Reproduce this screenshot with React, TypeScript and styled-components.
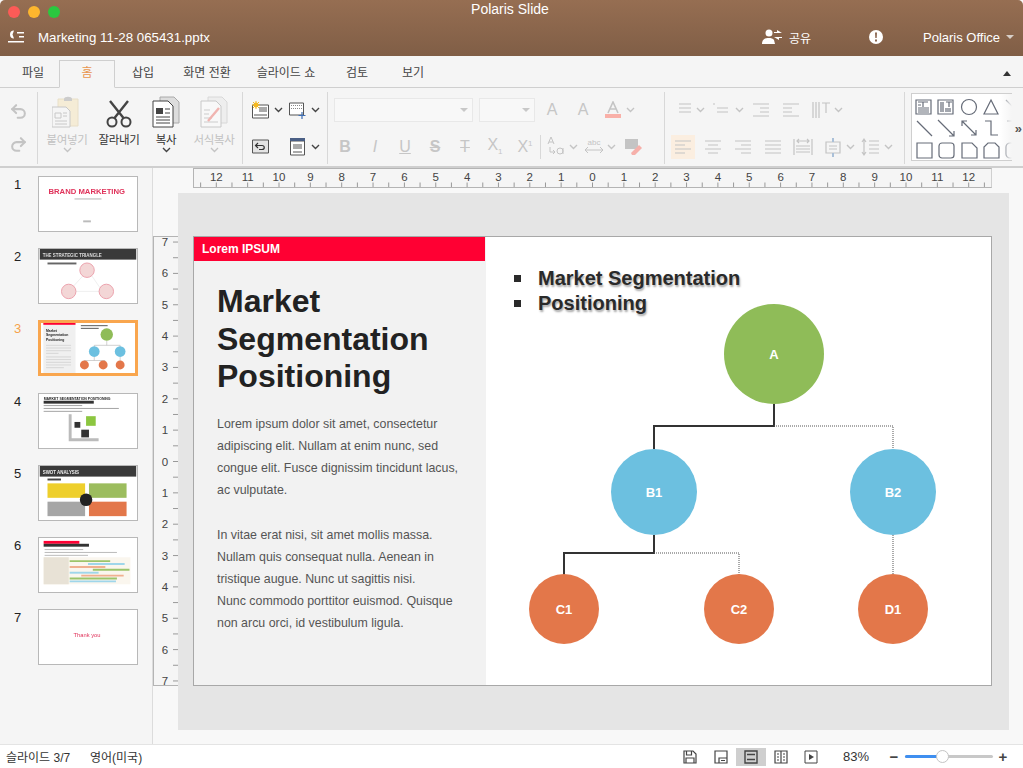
import React from 'react'
import styled, { createGlobalStyle } from 'styled-components'
import { Undo2, Redo2 } from 'lucide-react'

const KR = `"Liberation Sans", "Noto Sans CJK KR", sans-serif`

const GlobalStyle = createGlobalStyle`
    html, body { margin: 0; padding: 0; background: #f8f8f8; }
    body { font-family: ${KR}; overflow: hidden; }
    * { box-sizing: border-box; }
`

const Window = styled.div`
    width: 1023px;
    height: 768px;
    display: flex;
    flex-direction: column;
    overflow: hidden;
`

/* title bar */
const TitleBar = styled.div`
    height: 56px;
    flex: none;
    color: #fff;
    border-radius: 5px 5px 0 0;
    background: linear-gradient(#966e52, #805e46);
    display: flex;
    flex-direction: column;
`
const TitleTop = styled.div`
    height: 20px;
    position: relative;
    text-align: center;
    font-size: 14px;
    line-height: 19px;
    padding-right: 3px;
`
const Lights = styled.div`
    position: absolute;
    left: 8px;
    top: 6px;
    display: flex;
    gap: 8px;
`
const Light = styled.span<{ $c: string }>`
    width: 12px;
    height: 12px;
    border-radius: 50%;
    background: ${p => p.$c};
`
const TitleRow = styled.div`
    display: flex;
    align-items: center;
    height: 30px;
    margin-top: 2px;
    padding-left: 8px;
    font-size: 13px;
`
const FileName = styled.span`
    margin-left: 14px;
    flex: 1;
    font-size: 13.3px;
`
const Share = styled.span`
    display: flex;
    align-items: center;
    gap: 6px;
    font-size: 12px;
    width: 107px;
`
const Account = styled.span`
    margin-left: 40px;
    display: flex;
    align-items: center;
    gap: 6px;
    width: 100px;
    font-size: 13px;
`
const Caret = styled.i`
    border: 4px solid transparent;
    border-top: 4px solid #d8cfc8;
    border-bottom: 0;
`

/* tabs */
const TabBar = styled.div`
    height: 32px;
    flex: none;
    background: #f5f5f5;
    border-bottom: 1px solid #cfcfcf;
    display: flex;
    align-items: flex-end;
    padding-left: 7px;
    position: relative;
`
const Tab = styled.div<{ $w: number; $active?: boolean }>`
    width: ${p => p.$w}px;
    height: 28px;
    margin-bottom: -1px;
    text-align: center;
    font-size: 12px;
    line-height: 24px;
    color: ${p => (p.$active ? '#e8964e' : '#444')};
    border: 1px solid ${p => (p.$active ? '#cfcfcf' : 'transparent')};
    border-bottom-color: ${p => (p.$active ? '#f5f5f5' : 'transparent')};
`
const Collapse = styled.i`
    position: absolute;
    right: 12px;
    top: 15px;
    border: 4px solid transparent;
    border-bottom: 5px solid #333;
    border-top: 0;
`

/* ribbon */
const Ribbon = styled.div`
    height: 80px;
    flex: none;
    background: #f5f5f5;
    border-bottom: 2px solid #cfcfcf;
    display: flex;
    padding-top: 4px;
    padding-bottom: 2px;
    position: relative;
`
const Group = styled.div<{ $w: number }>`
    width: ${p => p.$w}px;
    flex: none;
    border-right: 1px solid #d8d8d8;
    display: flex;
    flex-direction: column;
    gap: 2px;
`
const Row = styled.div<{ $h?: number; $pl?: number }>`
    height: ${p => p.$h ?? 36}px;
    padding-left: ${p => p.$pl ?? 0}px;
    display: flex;
    align-items: center;
`
const Tool = styled.span<{ $w?: number; $ml?: number; $on?: boolean }>`
    width: ${p => p.$w ?? 24}px;
    height: 24px;
    margin-left: ${p => p.$ml ?? 0}px;
    flex: none;
    display: flex;
    align-items: center;
    justify-content: center;
    background: ${p => (p.$on ? '#fbeee0' : 'transparent')};
`
const Glyph = styled.span<{ $b?: boolean; $i?: boolean; $u?: boolean; $s?: boolean }>`
    font-size: 16px;
    color: #c6c6c6;
    font-weight: ${p => (p.$b ? 700 : 400)};
    font-style: ${p => (p.$i ? 'italic' : 'normal')};
    text-decoration: ${p => (p.$u ? 'underline' : p.$s ? 'line-through' : 'none')};
`
const Sub = styled.sub`
    font-size: 8px;
`
const Sup = styled.sup`
    font-size: 8px;
`
const UndoCol = styled(Group)`
    align-items: center;
    padding-right: 1px;
    gap: 14px;
    padding-top: 10px;
`
const BigTools = styled(Group)`
    flex-direction: row;
    padding-left: 0;
    gap: 0;
`
const BigTool = styled.div<{ $w: number; $off?: boolean }>`
    width: ${p => p.$w}px;
    display: flex;
    flex-direction: column;
    align-items: center;
    font-size: 11.5px;
    letter-spacing: -0.3px;
    color: ${p => (p.$off ? '#c2c2c2' : '#333')};
`
const BigIcon = styled.div`
    height: 36px;
    display: flex;
    align-items: flex-end;
    margin-bottom: 3px;
`
const SelectBox = styled.div<{ $w: number; $ml: number }>`
    width: ${p => p.$w}px;
    height: 24px;
    margin-left: ${p => p.$ml}px;
    flex: none;
    background: #f8f8f8;
    border: 1px solid #e8e8e8;
    display: flex;
    align-items: center;
    justify-content: flex-end;
    padding-right: 4px;
`
const SelectCaret = styled.i`
    border: 4px solid transparent;
    border-top: 4px solid #c8c8c8;
    border-bottom: 0;
`
const Sep = styled.i`
    width: 1px;
    height: 24px;
    margin-left: 3px;
    background: #d8d8d8;
`
const Gallery = styled.div`
    position: relative;
    width: 101px;
    height: 68px;
    margin: 1px 0 0 6px;
    background: #fff;
    border: 1px solid #cfcfcf;
    border-right: 0;
    overflow: hidden;
    display: grid;
    grid-template-columns: repeat(5, 22.3px);
    grid-auto-rows: 21.5px;
    padding: 2px 0 0 1px;
`
const Shape = styled.span`
    display: flex;
    align-items: center;
    justify-content: center;
`
const Fade = styled.i`
    position: absolute;
    top: 0;
    bottom: 0;
    right: 0;
    width: 12px;
    background: linear-gradient(90deg, rgba(245, 245, 245, 0), #f5f5f5);
`
const More = styled.span`
    position: absolute;
    right: 1px;
    top: 33px;
    font-size: 13px;
    font-weight: 700;
    color: #555;
`

/* main area */
const Main = styled.div`
    flex: 1;
    display: flex;
    min-height: 0;
`
const Sidebar = styled.div`
    width: 153px;
    flex: none;
    background: #f5f5f5;
    border-right: 1px solid #dcdcdc;
    padding-top: 8px;
    display: flex;
    flex-direction: column;
    gap: 16.2px;
`
const ThumbRow = styled.div`
    display: flex;
    height: 56px;
`
const ThumbNum = styled.span<{ $on?: boolean }>`
    width: 38px;
    padding: 1px 0 0 14px;
    font-size: 13px;
    color: ${p => (p.$on ? '#f5a24a' : '#222')};
`
const Thumb = styled.div<{ $on?: boolean }>`
    width: 100px;
    height: 56px;
    background: #fff;
    border: ${p => (p.$on ? '3px solid #f9a64e' : '1px solid #b8b8b8')};
    overflow: hidden;
    svg { display: block; width: 100%; height: 100%; filter: blur(0.25px); }
`
const Work = styled.div`
    flex: 1;
    background: #f8f8f8;
    display: flex;
    flex-direction: column;
    min-width: 0;
`
const HRuler = styled.div`
    width: 799px;
    height: 20px;
    margin-left: 40px;
    background: #f5f5f5;
    border: 1px solid #b4b4b4;
    border-right-color: #d0d0d0;
    flex: none;
    svg { display: block; }
`
const CanvasRow = styled.div`
    display: flex;
    margin-top: 5px;
`
const VRuler = styled.div`
    width: 25px;
    height: 450px;
    margin-top: 43px;
    background: #f5f5f5;
    border: 1px solid #b4b4b4;
    border-right: 0;
    flex: none;
    svg { display: block; }
`
const Canvas = styled.div`
    width: 831px;
    height: 537px;
    background: #e5e5e5;
    padding: 43px 0 0 15px;
`

/* slide */
const Slide = styled.div`
    width: 799px;
    height: 450px;
    background: #fff;
    border: 1px solid #a8a8a8;
    display: flex;
`
const LeftPane = styled.div`
    width: 292px;
    flex: none;
    background: #f2f2f2;
`
const RedBar = styled.div`
    width: 291px;
    height: 24px;
    background: #ff0033;
    color: #fff;
    font-size: 12px;
    font-weight: 700;
    line-height: 24px;
    padding-left: 8px;
`
const SlideTitle = styled.h1`
    margin: 22px 0 0 23px;
    font-size: 32px;
    line-height: 37.5px;
    font-weight: 700;
    color: #222;
`
const SlideBody = styled.p`
    margin: 17px 0 0 23px;
    font-size: 12.4px;
    line-height: 22.2px;
    color: #555;
    white-space: nowrap;
`
const RightPane = styled.div`
    flex: 1;
    position: relative;
`
const Bullets = styled.ul`
    margin: 0;
    padding: 29px 0 0 52px;
    list-style: none;
    font-size: 20px;
    line-height: 25px;
    font-weight: 700;
    color: #2a2a2a;
    text-shadow: 1px 2px 2px rgba(0, 0, 0, 0.35);
`
const BulletItem = styled.li`
    position: relative;
    &::before {
        content: '';
        position: absolute;
        left: -24px;
        top: 9px;
        width: 7px;
        height: 7px;
        background: #2a2a2a;
    }
`
const Wires = styled.svg`
    position: absolute;
    left: 0;
    top: 0;
`
const Node = styled.div<{ $x: number; $y: number; $r: number; $c: string }>`
    position: absolute;
    left: ${p => p.$x - p.$r}px;
    top: ${p => p.$y - p.$r}px;
    width: ${p => p.$r * 2}px;
    height: ${p => p.$r * 2}px;
    border-radius: 50%;
    background: ${p => p.$c};
    color: #fff;
    font-size: 13px;
    font-weight: 700;
    display: flex;
    align-items: center;
    justify-content: center;
`

/* status bar */
const StatusBar = styled.div`
    height: 24px;
    flex: none;
    background: #fff;
    border-top: 1px solid #e4e4e4;
    display: flex;
    align-items: center;
    padding-left: 6px;
    font-size: 12px;
    color: #333;
`
const StatusText = styled.span<{ $w: number }>`
    width: ${p => p.$w}px;
    flex: none;
`
const ViewBtn = styled.span<{ $on?: boolean; $ml?: number }>`
    width: 30px;
    height: 18px;
    margin-left: ${p => p.$ml ?? 0}px;
    display: flex;
    align-items: center;
    justify-content: center;
    background: ${p => (p.$on ? '#cfcfcf' : 'transparent')};
`
const Zoom = styled.span`
    margin-left: 17px;
    width: 45px;
    font-size: 13px;
`
const Sign = styled.span`
    font-size: 15px;
    font-weight: 700;
    line-height: 14px;
    width: 12px;
    text-align: center;
    color: #444;
`
const Track = styled.div`
    position: relative;
    width: 88px;
    height: 3px;
    margin: 0 4px 0 5px;
    border-radius: 2px;
    background: #c8c8c8;
`
const TrackFill = styled.div`
    width: 37px;
    height: 100%;
    border-radius: 2px;
    background: #3f8ff0;
`
const Thumbnail = styled.i`
    position: absolute;
    left: 31px;
    top: -5px;
    width: 13px;
    height: 13px;
    border-radius: 50%;
    background: #fff;
    border: 1px solid #c4c4c4;
`

const Svg = ({ w = 20, h = 20, c = '#c4c4c4', sw = 1.2, children }: { w?: number; h?: number; c?: string; sw?: number; children: React.ReactNode }) => (
    <svg width={w} height={h} viewBox={`0 0 ${w} ${h}`} fill="none" stroke={c} strokeWidth={sw}>
        {children}
    </svg>
)

const Chev = ({ c = '#c4c4c4' }: { c?: string }) => (
    <svg width="9" height="6" viewBox="0 0 9 6" fill="none" stroke={c} strokeWidth="1.4"><path d="M1 1l3.5 3.5L8 1" /></svg>
)

const Lines = ({ rows }: { rows: [number, number][] }) => (
    <Svg w={18} h={18}>
        <path d={rows.map(([a, b], i) => `M${a} ${3 + i * 4}H${b}`).join('')} />
    </Svg>
)

const PasteIcon = () => (
    <svg width="30" height="32" viewBox="0 0 30 32" fill="none">
        <path d="M6 3h20v27H6z" fill="#f5ecd6" stroke="#e8dfc8" />
        <path d="M12 3c0-3 8-3 8 0v2h-8z" fill="#ccc" />
        <path d="M0 11h14l4 4v16H0z" fill="#f5f5f5" stroke="#c8c8c8" />
        <path d="M3 17h6v5H3zM11 17h4M11 20h4M3 25h12M3 28h12" stroke="#c8c8c8" />
    </svg>
)
const CutIcon = () => (
    <svg width="26" height="28" viewBox="0 0 26 28" fill="none" stroke="#444">
        <circle cx="6" cy="22" r="4.5" strokeWidth="2" />
        <circle cx="20" cy="22" r="4.5" strokeWidth="2" />
        <path d="M8.5 18L22 1M17.5 18L4 1" strokeWidth="2.4" />
    </svg>
)
const CopyIcon = () => (
    <svg width="28" height="32" viewBox="0 0 28 32" fill="none">
        <path d="M8 1h14l5 5v21H8z" fill="#ddd" stroke="#aaa" />
        <path d="M1 5h15l5 5v21H1z" fill="#fff" stroke="#444" />
        <path d="M4 12h7v6H4z" fill="#444" />
        <path d="M13 13h5M13 17h5M4 21h14M4 24h14M4 27h14" stroke="#444" />
    </svg>
)
const FormatIcon = () => (
    <svg width="28" height="32" viewBox="0 0 28 32" fill="none">
        <path d="M8 1h14l5 5v21H8z" fill="#eee" stroke="#d8d8d8" />
        <path d="M1 5h15l5 5v21H1z" fill="#f8f8f8" stroke="#c8c8c8" />
        <path d="M4 14h6M4 18h5M4 22h8M4 26h14" stroke="#ccc" />
        <path d="M8 25L19 12" stroke="#f0b4b0" strokeWidth="2.4" />
    </svg>
)
const NewSlideIcon = () => (
    <svg width="18" height="18" viewBox="0 0 18 18" fill="none">
        <path d="M.5 4h16v13H.5z" fill="#fff" stroke="#555" />
        <path d="M7 6h8v5H7zM2 13h13v2H2z" fill="#aaa" />
        <circle cx="4" cy="4" r="2.4" fill="#f5b921" />
        <path d="M4 0v8M0 4h8M1 1l6 6M7 1L1 7" stroke="#f5b921" />
    </svg>
)
const TableIcon = () => (
    <svg width="18" height="18" viewBox="0 0 18 18" fill="none">
        <path d="M.5 2h14v12H.5z" stroke="#555" fill="#fff" />
        <path d="M2 4.5h11M2 7.5h11" stroke="#888" strokeDasharray="1 1" />
        <path d="M13 11v7M9.5 14.500h7" stroke="#3f6fb5" strokeWidth="1.2" />
    </svg>
)
const ResetIcon = () => (
    <svg width="18" height="16" viewBox="0 0 18 16" fill="none">
        <path d="M.5 1h16v13H.5z" fill="#e4e4e4" stroke="#555" />
        <path d="M6 4L3.500 6.500 6 9M4 6.500h6c3 0 3 4 0 4H7" stroke="#333" strokeWidth="1.2" />
    </svg>
)
const LayoutIcon = () => (
    <svg width="16" height="18" viewBox="0 0 16 18" fill="none">
        <path d="M.5 3h14v14H.5z" fill="#fff" stroke="#555" />
        <path d="M0 0h15v3H0z" fill="#4a5f85" />
        <path d="M3 6h9v5H3zM3 13h9v2H3z" fill="#aaa" />
    </svg>
)

const shapes = [
    <g><path d="M1 2h15v14H1z" /><path d="M3 4h10M8 4v5M3 7h3M3 10h11M3 12h11M3 14h11" /></g>,
    <g><path d="M1 2h15v14H1z" /><path d="M4 4v10M6 4v10M9 4h6M12 4v5M9 10v4M11 10v4M13 10v4" /></g>,
    <circle cx="9" cy="9" r="7.500" />,
    <path d="M9 2l7 14H2z" />,
    <path d="M2 2l14 14" />,
    <path d="M2 2l15 15" />,
    <path d="M1 1l16 16M17 12v5h-5" />,
    <path d="M2 2l14 14M2 7V2h5M16 11v5h-5" />,
    <path d="M3 2h6v14h7" />,
    <path d="M3 2h6v14h7" />,
    <path d="M2 2h15v15H2z" />,
    <rect x="2" y="2" width="15" height="15" rx="3" />,
    <path d="M2 2h10l5 5v10H2z" />,
    <path d="M6 2h7l4 4v11H2V6z" />,
    <rect x="2" y="2" width="15" height="15" rx="4" />,
]

const RulerH = () => {
    const u = 31.35
    const c = 398.500
    const ticks = []
    for (let i = -25; i <= 25; i++) ticks.push(c + (i * u) / 2)
    const nums = []
    for (let i = -12; i <= 12; i++) nums.push(i)
    return (
        <svg width="797" height="18" viewBox="0 0 797 18">
            {ticks.map(x => (
                <line key={x} x1={x} x2={x} y1={13.500} y2={18} stroke="#999" />
            ))}
            {nums.map(n => (
                <text key={n} x={c + n * u} y={12} fontSize="11.5" fill="#444" textAnchor="middle" fontFamily={KR}>{Math.abs(n)}</text>
            ))}
        </svg>
    )
}

const RulerV = () => {
    const u = 31.35
    const c = 224.500
    const ticks = []
    for (let i = -14; i <= 14; i++) ticks.push(c + (i * u) / 2)
    const nums = []
    for (let i = -7; i <= 7; i++) nums.push(i)
    return (
        <svg width="24" height="448" viewBox="0 0 24 448">
            {ticks.map(y => (
                <line key={y} x1={19} x2={24} y1={y} y2={y} stroke="#999" />
            ))}
            {nums.map(n => (
                <text key={n} x={11} y={c + n * u + 4} fontSize="11.5" fill="#444" textAnchor="middle" fontFamily={KR}>{Math.abs(n)}</text>
            ))}
        </svg>
    )
}

const T = ({ x, y, s, c = '#222', b, children }: { x: number; y: number; s: number; c?: string; b?: boolean; children: React.ReactNode }) => (
    <text x={x} y={y} fontSize={s} fill={c} fontWeight={b ? 700 : 400} fontFamily={KR}>{children}</text>
)

const thumbs = [
    <svg viewBox="0 0 100 56">
        <T x={9} y={18} s={8} c="#e0325a" b>BRAND MARKETING</T>
        <rect x={36} y={22} width={28} height={1.500} fill="#ccc" />
        <rect x={45} y={45} width={8} height={2} fill="#bbb" />
    </svg>,
    <svg viewBox="0 0 100 56">
        <rect width="100" height="11" fill="#3a3a3a" />
        <T x={3} y={8} s={4.600} c="#ddd" b>THE STRATEGIC TRIANGLE</T>
        <rect x={8} y={14} width={30} height={2} fill="#666" />
        <path d="M50 22L30 44H65z" stroke="#eee" fill="none" />
        {[[49, 22], [30, 44], [69, 44]].map(([x, y]) => (
            <circle key={x} cx={x} cy={y} r={7.500} fill="#f3d6d6" stroke="#eba0ac" />
        ))}
    </svg>,
    <svg viewBox="0 0 100 56">
        <rect width="36" height="56" fill="#f0f0f0" />
        <rect width="36" height="2" fill="#ff0033" />
        <T x={3} y={10} s={3.800} b>Market</T>
        <T x={3} y={15} s={3.800} b>Segmentation</T>
        <T x={3} y={20} s={3.800} b>Positioning</T>
        <path d="M3 25h28M3 28h28M3 31h28M3 34h14M3 38h28M3 41h28M3 44h28M3 47h28M3 50h20" stroke="#ccc" strokeWidth=".8" />
        <path d="M42 3h30M42 6h20" stroke="#444" strokeWidth="1" />
        <path d="M71 20v5H57v4M71 25h15v4M57 38v4H46v3M57 42h12v3M86 38v7" stroke="#999" strokeWidth=".5" fill="none" />
        <circle cx="71" cy="13" r="7" fill="#8fbc58" />
        <circle cx="57" cy="32" r="6" fill="#6cc0e0" />
        <circle cx="86" cy="32" r="6" fill="#6cc0e0" />
        <circle cx="46" cy="47" r="5" fill="#e3774a" />
        <circle cx="67" cy="47" r="5" fill="#e3774a" />
        <circle cx="86" cy="47" r="5" fill="#e3774a" />
    </svg>,
    <svg viewBox="0 0 100 56">
        <T x={4} y={6} s={3.600} b>MARKET SEGMENTATION POSITIONING</T>
        <rect x={4} y={7} width={52} height={3} fill="#333" />
        <path d="M4 12h40M4 15h78M4 18h40" stroke="#888" strokeWidth=".8" />
        <path d="M30 21h3v25h28v3H30z" fill="#bbb" />
        <rect x="36" y="29" width="6" height="6" fill="#333" />
        <rect x="43" y="37" width="8" height="8" fill="#333" />
        <rect x="48" y="23" width="10" height="10" fill="#8cc640" />
    </svg>,
    <svg viewBox="0 0 100 56">
        <rect width="100" height="11" fill="#3a3a3a" />
        <T x={3} y={8} s={4.600} c="#eee" b>SWOT ANALYSIS</T>
        <rect x={8} y={13} width={14} height={2} fill="#444" />
        <rect x="8" y="18" width="39" height="15" fill="#eecf2c" />
        <rect x="51" y="18" width="39" height="15" fill="#9cbd5e" />
        <rect x="8" y="37" width="39" height="15" fill="#a6a6a6" />
        <rect x="51" y="37" width="39" height="15" fill="#e3774a" />
        <circle cx="48" cy="35" r="6.500" fill="#222" />
    </svg>,
    <svg viewBox="0 0 100 56">
        <rect x="4" y="3" width="37" height="3" fill="#ff0033" />
        <rect x="4" y="6" width="47" height="3" fill="#333" />
        <path d="M5 12h40M5 15h75M5 18h45" stroke="#999" strokeWidth=".7" />
        <rect x="4" y="20" width="90" height="28" fill="#faf6ee" />
        <rect x="4" y="20" width="26" height="28" fill="#e8e2d6" />
        <path d="M31 24h42" stroke="#9cc46a" strokeWidth="2" />
        <path d="M50 27h38" stroke="#9fd6ea" strokeWidth="2" />
        <path d="M31 30h37" stroke="#f0b090" strokeWidth="2" />
        <path d="M55 33h38" stroke="#9cc46a" strokeWidth="2" />
        <path d="M31 36h30" stroke="#9fd6ea" strokeWidth="2" />
        <path d="M43 39h44" stroke="#f0b090" strokeWidth="2" />
        <path d="M31 42h49" stroke="#9cc46a" strokeWidth="2" />
        <path d="M31 45h48" stroke="#9fd6ea" strokeWidth="2" />
    </svg>,
    <svg viewBox="0 0 100 56">
        <T x={35} y={28} s={6} c="#e0325a">Thank you</T>
    </svg>,
]

const tabs: [string, number][] = [
    ['파일', 52], ['홈', 56], ['삽입', 56], ['화면 전환', 72], ['슬라이드 쇼', 86], ['검토', 56], ['보기', 56],
]

const bodyLines = [
    'Lorem ipsum dolor sit amet, consectetur',
    'adipiscing elit. Nullam at enim nunc, sed',
    'congue elit. Fusce dignissim tincidunt lacus,',
    'ac vulputate.',
    '',
    'In vitae erat nisi, sit amet mollis massa.',
    'Nullam quis consequat nulla. Aenean in',
    'tristique augue. Nunc ut sagittis nisi.',
    'Nunc commodo porttitor euismod. Quisque',
    'non arcu orci, id vestibulum ligula.',
]

export default function App() {
    return (
        <Window>
            <GlobalStyle />
            <TitleBar>
                <TitleTop>
                    <Lights>
                        <Light $c="#fc5b57" />
                        <Light $c="#fdb62e" />
                        <Light $c="#2ac83f" />
                    </Lights>
                    Polaris Slide
                </TitleTop>
                <TitleRow>
                    <svg width="16" height="14" viewBox="0 0 16 14" fill="#fff">
                        <path d="M0 11h16v1.500H0zM9 2h7v1.500H9zM11 6h5v1.500h-5z" />
                        <path d="M6 0.500a4 4 0 1 0 0 8l-1.500-4z" />
                    </svg>
                    <FileName>Marketing 11-28 065431.pptx</FileName>
                    <Share>
                        <svg width="21" height="16" viewBox="0 0 21 16" fill="#fff">
                            <circle cx="7" cy="4" r="3.500" />
                            <path d="M0 15c0-5 3-6 7-6 2 0 4 .5 5 2l1 4z" />
                            <path d="M15 3V1l5 3h-8V3zM17 9v2l-5-3h8v1z" />
                        </svg>
                        공유
                    </Share>
                    <svg width="14" height="14" viewBox="0 0 14 14">
                        <circle cx="7" cy="7" r="7" fill="#fff" />
                        <path d="M6 2.500h2l-.3 5.500H6.300zM6 9.500h2v2H6z" fill="#8a6650" />
                    </svg>
                    <Account>Polaris Office <Caret /></Account>
                </TitleRow>
            </TitleBar>

            <TabBar>
                {tabs.map(([label, w]) => (
                    <Tab key={label} $w={w} $active={label === '홈'}>{label}</Tab>
                ))}
                <Collapse />
            </TabBar>

            <Ribbon>
                <UndoCol $w={38}>
                    <Undo2 size={19} color="#c4c4c4" strokeWidth={2.6} />
                    <Redo2 size={19} color="#c4c4c4" strokeWidth={2.6} />
                </UndoCol>
                <BigTools $w={205}>
                    <BigTool $w={58} $off>
                        <BigIcon><PasteIcon /></BigIcon>
                        붙여넣기
                        <Chev />
                    </BigTool>
                    <BigTool $w={46}>
                        <BigIcon><CutIcon /></BigIcon>
                        잘라내기
                    </BigTool>
                    <BigTool $w={48}>
                        <BigIcon><CopyIcon /></BigIcon>
                        복사
                        <Chev c="#444" />
                    </BigTool>
                    <BigTool $w={48} $off>
                        <BigIcon><FormatIcon /></BigIcon>
                        서식복사
                        <Chev />
                    </BigTool>
                </BigTools>
                <Group $w={85}>
                    <Row $pl={6}>
                        <Tool $w={24}><NewSlideIcon /></Tool>
                        <Tool $w={10}><Chev c="#444" /></Tool>
                        <Tool $w={24} $ml={3}><TableIcon /></Tool>
                        <Tool $w={10}><Chev c="#444" /></Tool>
                    </Row>
                    <Row $pl={6}>
                        <Tool $w={24}><ResetIcon /></Tool>
                        <Tool $w={24} $ml={13}><LayoutIcon /></Tool>
                        <Tool $w={10}><Chev c="#444" /></Tool>
                    </Row>
                </Group>
                <Group $w={337}>
                    <Row>
                        <SelectBox $w={139} $ml={6}><SelectCaret /></SelectBox>
                        <SelectBox $w={56} $ml={6}><SelectCaret /></SelectBox>
                        <Tool $w={24} $ml={5}><Glyph>A</Glyph></Tool>
                        <Tool $w={24} $ml={7}><Glyph>A</Glyph></Tool>
                        <Tool $w={24} $ml={6}>
                            <svg width="18" height="18" viewBox="0 0 18 18" fill="none">
                                <path d="M4 12L9 1l5 11M6 8h6" stroke="#c4c4c4" strokeWidth="1.600" />
                                <path d="M1 13h16v4H1z" fill="#f9b0a8" />
                            </svg>
                        </Tool>
                        <Tool $w={10}><Chev /></Tool>
                    </Row>
                    <Row $pl={5}>
                        <Tool><Glyph $b>B</Glyph></Tool>
                        <Tool $ml={6}><Glyph $i>I</Glyph></Tool>
                        <Tool $ml={6}><Glyph $u>U</Glyph></Tool>
                        <Tool $ml={6}><Glyph $b $s>S</Glyph></Tool>
                        <Tool $ml={6}><Glyph $s>T</Glyph></Tool>
                        <Tool $ml={6}><Glyph>X<Sub>1</Sub></Glyph></Tool>
                        <Tool $ml={6}><Glyph>X<Sup>1</Sup></Glyph></Tool>
                        <Sep />
                        <Tool $ml={3}>
                            <svg width="20" height="22" viewBox="0 0 20 22" fill="none" stroke="#c4c4c4">
                                <path d="M2 8l3-7 3 7M3 6h4M4 11v5h5M7 14l2 2-2 2" />
                                <circle cx="14" cy="15" r="3" />
                                <path d="M17 12v6" />
                            </svg>
                        </Tool>
                        <Tool $w={10}><Chev /></Tool>
                        <Tool $ml={4}>
                            <svg width="22" height="20" viewBox="0 0 22 20" fill="none" stroke="#c4c4c4">
                                <text x="11" y="8" fontSize="8" textAnchor="middle" fill="#c4c4c4" stroke="none" fontFamily={KR}>abc</text>
                                <path d="M2 13h18M5 10l-3 3 3 3M17 10l3 3-3 3" />
                            </svg>
                        </Tool>
                        <Tool $w={10}><Chev /></Tool>
                        <Tool $ml={5}>
                            <svg width="18" height="18" viewBox="0 0 18 18" fill="none">
                                <path d="M1 1h13v10H1z" fill="#c4c4c4" />
                                <path d="M7 15l8-8 3 3-7 7H8z" fill="#f6b0aa" />
                            </svg>
                        </Tool>
                    </Row>
                </Group>
                <Group $w={240}>
                    <Row $pl={6}>
                        <Tool><Lines rows={[[5, 17], [5, 17], [5, 17]]} /></Tool>
                        <Tool $w={10}><Chev /></Tool>
                        <Tool $ml={3}><Lines rows={[[2, 4], [6, 17], [6, 17]]} /></Tool>
                        <Tool $w={10} $ml={2}><Chev /></Tool>
                        <Tool $ml={5}><Lines rows={[[1, 17], [8, 17], [8, 17], [1, 17]]} /></Tool>
                        <Tool $ml={6}><Lines rows={[[1, 17], [1, 10], [1, 10], [1, 17]]} /></Tool>
                        <Tool $ml={6}>
                            <Svg w={20} h={20}><path d="M2 2v16M5 2v16M8 2v16M11 3h8M15 3v10" /></Svg>
                        </Tool>
                        <Tool $w={10}><Chev /></Tool>
                    </Row>
                    <Row $pl={6}>
                        <Tool $on $w={24}><Lines rows={[[1, 17], [1, 11], [1, 17], [1, 11]]} /></Tool>
                        <Tool $ml={6}><Lines rows={[[1, 17], [4, 14], [1, 17], [4, 14]]} /></Tool>
                        <Tool $ml={6}><Lines rows={[[1, 17], [7, 17], [1, 17], [7, 17]]} /></Tool>
                        <Tool $ml={6}><Lines rows={[[1, 17], [1, 17], [1, 17], [1, 17]]} /></Tool>
                        <Tool $ml={6}>
                            <Svg><path d="M1 2v16M19 2v16M4 4h12M6 2L4 4l2 2M14 2l2 2-2 2M3 9h14M3 12h14M3 15h14" /></Svg>
                        </Tool>
                        <Tool $ml={6}>
                            <Svg><path d="M3 5h14v11H3zM6 9h8M6 12h8" /><path d="M10 1v4M10 16v4" stroke="#aac0d8" strokeWidth="2" /></Svg>
                        </Tool>
                        <Tool $w={10}><Chev /></Tool>
                        <Tool $ml={4}>
                            <Svg><path d="M3 2v16M1 5l2-3 2 3M1 15l2 3 2-3M8 4h10M8 8h10M8 12h10M8 16h10" /></Svg>
                        </Tool>
                        <Tool $w={10}><Chev /></Tool>
                    </Row>
                </Group>
                <Gallery>
                    {shapes.map((s, i) => (
                        <Shape key={i}>
                            <Svg w={18} h={18} c="#666c78">{s}</Svg>
                        </Shape>
                    ))}
                    <Fade />
                </Gallery>
                <More>»</More>
            </Ribbon>

            <Main>
                <Sidebar>
                    {thumbs.map((t, i) => (
                        <ThumbRow key={i}>
                            <ThumbNum $on={i === 2}>{i + 1}</ThumbNum>
                            <Thumb $on={i === 2}>{t}</Thumb>
                        </ThumbRow>
                    ))}
                </Sidebar>
                <Work>
                    <HRuler><RulerH /></HRuler>
                    <CanvasRow>
                        <VRuler><RulerV /></VRuler>
                        <Canvas>
                            <Slide>
                                <LeftPane>
                                    <RedBar>Lorem IPSUM</RedBar>
                                    <SlideTitle>Market<br />Segmentation<br />Positioning</SlideTitle>
                                    <SlideBody>
                                        {bodyLines.map((l, i) => (
                                            <React.Fragment key={i}>{l}<br /></React.Fragment>
                                        ))}
                                    </SlideBody>
                                </LeftPane>
                                <RightPane>
                                    <Bullets>
                                        <BulletItem>Market Segmentation</BulletItem>
                                        <BulletItem>Positioning</BulletItem>
                                    </Bullets>
                                    <Wires width="505" height="448" fill="none">
                                        <path d="M288 167v22H168v23M168 298v18H78v22" stroke="#333" strokeWidth="2" />
                                        <path d="M288 189h119v23M168 316h85v22M407 298v40" stroke="#555" strokeDasharray="1 1" />
                                    </Wires>
                                    <Node $x={288} $y={117} $r={50} $c="#8fbc58">A</Node>
                                    <Node $x={168} $y={255} $r={43} $c="#6cc0e0">B1</Node>
                                    <Node $x={407} $y={255} $r={43} $c="#6cc0e0">B2</Node>
                                    <Node $x={78} $y={372} $r={35} $c="#e3774a">C1</Node>
                                    <Node $x={253} $y={372} $r={35} $c="#e3774a">C2</Node>
                                    <Node $x={407} $y={372} $r={35} $c="#e3774a">D1</Node>
                                </RightPane>
                            </Slide>
                        </Canvas>
                    </CanvasRow>
                </Work>
            </Main>

            <StatusBar>
                <StatusText $w={84}>슬라이드 3/7</StatusText>
                <StatusText $w={585}>영어(미국)</StatusText>
                <ViewBtn>
                    <Svg w={14} h={14} c="#444"><path d="M1 1h9l3 3v9H1zM3.500 1v4h5V1M3 8h8v5H3z" /></Svg>
                </ViewBtn>
                <ViewBtn $ml={1}>
                    <Svg w={14} h={14} c="#444"><path d="M1 1h12v12H1zM5 13V8h8M7 10.500h4" /></Svg>
                </ViewBtn>
                <ViewBtn $on>
                    <Svg w={14} h={14} c="#444" sw={1.4}><path d="M1 1h12v12H1zM3 4.500h8M3 9.500h8" /></Svg>
                </ViewBtn>
                <ViewBtn>
                    <Svg w={14} h={14} c="#444"><path d="M1 1h12v12H1zM7 1v12M3 4h2M3 7h2M3 10h2M9 4h2M9 7h2M9 10h2" /></Svg>
                </ViewBtn>
                <ViewBtn>
                    <svg width="14" height="14" viewBox="0 0 14 14" fill="none">
                        <path d="M1 1h12v12H1z" stroke="#444" />
                        <path d="M5 4l5 3-5 3z" fill="#444" />
                    </svg>
                </ViewBtn>
                <Zoom>83%</Zoom>
                <Sign>−</Sign>
                <Track>
                    <TrackFill />
                    <Thumbnail />
                </Track>
                <Sign>+</Sign>
            </StatusBar>
        </Window>
    )
}
